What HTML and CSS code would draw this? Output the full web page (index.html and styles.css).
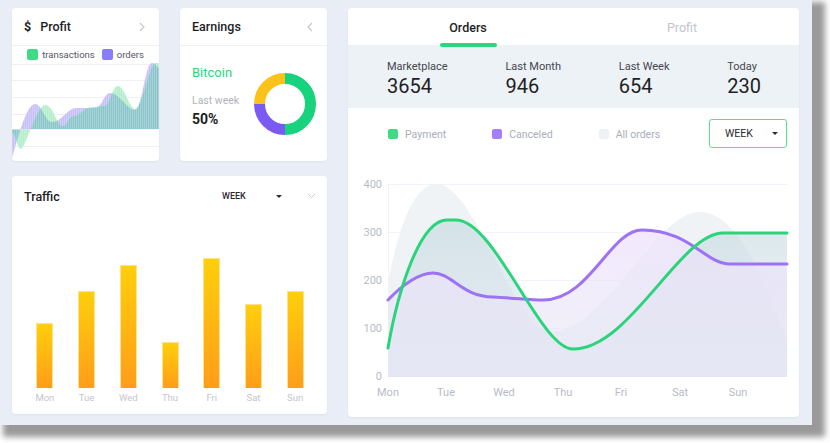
FILE: index.html
```html
<!DOCTYPE html>
<html>
<head>
<meta charset="utf-8">
<link rel="stylesheet" href="styles.css">
</head>
<body>
<div class="frame">

  <div class="card profit">
    <div class="card-head">
      <span class="title"><b class="dollar">$</b>Profit</span>
      <svg class="chev" width="6" height="10" viewBox="0 0 6 10"><path d="M1 1l4 4-4 4" fill="none" stroke="#c4c7ce" stroke-width="1.1"/></svg>
    </div>
    <div class="mini-legend">
      <span class="ml"><i class="sw sw-green"></i>transactions</span>
      <span class="ml"><i class="sw sw-purple"></i>orders</span>
    </div>
    <svg class="profit-chart" width="147" height="99" viewBox="0 0 147 99">
      <defs>
        <clipPath id="clipPurple"><path d="M0,96 C5,80 14,42 23,42 C30,42 33,60 40,60 C50,60 55,46 65,46 C72,46 76,46 83,46 C90,46 92,31 98,31 C108,31 115,48 123,48 C130,48 133,1 140,1 C144,1 145,6 147,6 L147,67 L0,67 Z"/></clipPath>
        <clipPath id="clipBoth">
          <path d="M0,96 C5,80 14,42 23,42 C30,42 33,60 40,60 C50,60 55,46 65,46 C72,46 76,46 83,46 C90,46 92,31 98,31 C108,31 115,48 123,48 C130,48 133,1 140,1 C144,1 145,6 147,6 L147,67 L0,67 Z"/>
          <path d="M0,71 C4,71 5,87 9,87 C13,87 25,43 33,43 C42,43 44,64 51,64 C56,64 56,54 62,54 C68,54 72,45 80,45 C85,45 88,44 92,44 C98,44 100,24 106,24 C112,24 118,47 123,47 C130,47 138,1 143,1 L147,1 L147,67 L0,67 Z"/>
        </clipPath>
        <pattern id="stripes" width="2" height="4" patternUnits="userSpaceOnUse"><rect width="1" height="4" fill="#ffffff" opacity="0.22"/></pattern>
      </defs>
      <g stroke="#eef0f4" stroke-width="1">
        <line x1="0" y1="2.5" x2="147" y2="2.5"/>
        <line x1="0" y1="18.5" x2="147" y2="18.5"/>
        <line x1="0" y1="35.5" x2="147" y2="35.5"/>
        <line x1="0" y1="52.5" x2="147" y2="52.5"/>
        <line x1="0" y1="84.5" x2="147" y2="84.5"/>
      </g>
      <path fill="#c7bff8" d="M0,96 C5,80 14,42 23,42 C30,42 33,60 40,60 C50,60 55,46 65,46 C72,46 76,46 83,46 C90,46 92,31 98,31 C108,31 115,48 123,48 C130,48 133,1 140,1 C144,1 145,6 147,6 L147,67 L0,67 Z"/>
      <path fill="#b3eecb" d="M0,71 C4,71 5,87 9,87 C13,87 25,43 33,43 C42,43 44,64 51,64 C56,64 56,54 62,54 C68,54 72,45 80,45 C85,45 88,44 92,44 C98,44 100,24 106,24 C112,24 118,47 123,47 C130,47 138,1 143,1 L147,1 L147,67 L0,67 Z"/>
      <path fill="#8cc5ca" clip-path="url(#clipPurple)" d="M0,71 C4,71 5,87 9,87 C13,87 25,43 33,43 C42,43 44,64 51,64 C56,64 56,54 62,54 C68,54 72,45 80,45 C85,45 88,44 92,44 C98,44 100,24 106,24 C112,24 118,47 123,47 C130,47 138,1 143,1 L147,1 L147,67 L0,67 Z"/>
      <rect x="0" y="0" width="147" height="99" fill="url(#stripes)" clip-path="url(#clipBoth)"/>
      <line x1="0" y1="67.5" x2="147" y2="67.5" stroke="#e6e9f0" stroke-width="1" opacity="0.6"/>
    </svg>
  </div>

  <div class="card earnings">
    <div class="card-head">
      <span class="title">Earnings</span>
      <svg class="chev" width="6" height="10" viewBox="0 0 6 10"><path d="M5 1L1 5l4 4" fill="none" stroke="#c4c7ce" stroke-width="1.1"/></svg>
    </div>
    <div class="earn-body">
      <div class="earn-text">
        <div class="coin">Bitcoin</div>
        <div class="lw">Last week</div>
        <div class="pct">50%</div>
      </div>
      <svg class="donut" width="62" height="62" viewBox="0 0 62 62">
        <g fill="none" stroke-width="11">
          <path d="M31,5.5 A25.5,25.5 0 0 1 31,56.5" stroke="#18d37d"/>
          <path d="M31,56.5 A25.5,25.5 0 0 1 5.5,31" stroke="#7b5af4"/>
          <path d="M5.5,31 A25.5,25.5 0 0 1 31,5.5" stroke="#fbc21a"/>
        </g>
      </svg>
    </div>
  </div>

  <div class="card orders">
    <div class="tabs">
      <div class="tab active">Orders</div>
      <div class="tab">Profit</div>
    </div>
    <div class="stats">
      <div class="stat"><div class="stat-label">Marketplace</div><div class="stat-num">3654</div></div>
      <div class="stat"><div class="stat-label">Last Month</div><div class="stat-num">946</div></div>
      <div class="stat"><div class="stat-label">Last Week</div><div class="stat-num">654</div></div>
      <div class="stat"><div class="stat-label">Today</div><div class="stat-num">230</div></div>
    </div>
    <div class="order-legend">
      <span class="item"><i class="sq sq-green"></i>Payment</span>
      <span class="item"><i class="sq sq-purple"></i>Canceled</span>
      <span class="item"><i class="sq sq-light"></i>All orders</span>
      <div class="select"><span>WEEK</span><i class="caret"></i></div>
    </div>
    <svg class="main-chart" width="451" height="259" viewBox="348 158 451 259">
      <defs>
        <linearGradient id="gPurple" x1="0" y1="0" x2="0" y2="1">
          <stop offset="0" stop-color="#efe2fc" stop-opacity="0.75"/>
          <stop offset="1" stop-color="#e4e6f4" stop-opacity="0.55"/>
        </linearGradient>
        <linearGradient id="gGreen" x1="0" y1="0" x2="0" y2="1">
          <stop offset="0" stop-color="#c2d9df" stop-opacity="0.6"/>
          <stop offset="1" stop-color="#dcdff0" stop-opacity="0.45"/>
        </linearGradient>
      </defs>
      <g stroke="#f1f2fb" stroke-width="1">
        <line x1="388" y1="184.5" x2="787" y2="184.5"/>
        <line x1="388" y1="232.5" x2="787" y2="232.5"/>
        <line x1="388" y1="280.5" x2="787" y2="280.5"/>
        <line x1="388" y1="328.5" x2="787" y2="328.5"/>
        <line x1="388.5" y1="184" x2="388.5" y2="376"/>
      </g>
      <path fill="#edf2f5" opacity="0.9" d="M388,376 L388,282 C398,232 412,184 437,184 C475,184 515,332 550,332 C605,332 655,212 700,212 C740,212 768,290 787,340 L787,376 Z"/>
      <path fill="url(#gGreen)" d="M388,348 C398,290 420,220 447,220 L456,220 C495,220 540,349 573,349 C630,349 680,233 723,233 L787,233 L787,376 L388,376 Z"/>
      <path fill="url(#gPurple)" d="M388,300 C403,284 420,273 433,273 C452,273 462,297 493,297 C515,298 530,300 543,300 C590,300 610,230 642,230 C690,230 705,264 730,264 L787,264 L787,376 L388,376 Z"/>
      <line x1="388" y1="376.5" x2="787" y2="376.5" stroke="#e3e4f7" stroke-width="1"/>
      <path fill="none" stroke="#9d72f6" stroke-width="3" stroke-linecap="round" d="M388,300 C403,284 420,273 433,273 C452,273 462,297 493,297 C515,298 530,300 543,300 C590,300 610,230 642,230 C690,230 705,264 730,264 L787,264"/>
      <path fill="none" stroke="#2bd47b" stroke-width="3" stroke-linecap="round" d="M388,348 C398,290 420,220 447,220 L456,220 C495,220 540,349 573,349 C630,349 680,233 723,233 L787,233"/>
      <g class="axis" font-size="11" fill="#b7bbc7" text-anchor="end">
        <text x="382" y="188">400</text>
        <text x="382" y="236">300</text>
        <text x="382" y="284">200</text>
        <text x="382" y="332">100</text>
        <text x="382" y="380">0</text>
      </g>
      <g class="axis" font-size="11" fill="#b7bbc7" text-anchor="middle">
        <text x="388" y="396">Mon</text>
        <text x="446" y="396">Tue</text>
        <text x="504" y="396">Wed</text>
        <text x="563" y="396">Thu</text>
        <text x="621" y="396">Fri</text>
        <text x="680" y="396">Sat</text>
        <text x="738" y="396">Sun</text>
      </g>
    </svg>
  </div>

  <div class="card traffic">
    <div class="traffic-head">
      <span class="title grow">Traffic</span>
      <span class="wk">WEEK</span>
      <i class="caret"></i>
      <svg class="chev-down" width="9" height="6" viewBox="0 0 9 6"><path d="M1 1l3.5 3.5L8 1" fill="none" stroke="#c9ccd2" stroke-width="1"/></svg>
    </div>
    <div class="bars">
      <div class="slot"><div class="bar" style="height:65px"></div></div>
      <div class="slot"><div class="bar" style="height:97px"></div></div>
      <div class="slot"><div class="bar" style="height:123px"></div></div>
      <div class="slot"><div class="bar" style="height:46px"></div></div>
      <div class="slot"><div class="bar" style="height:130px"></div></div>
      <div class="slot"><div class="bar" style="height:84px"></div></div>
      <div class="slot"><div class="bar" style="height:97px"></div></div>
    </div>
    <div class="days">
      <span>Mon</span><span>Tue</span><span>Wed</span><span>Thu</span><span>Fri</span><span>Sat</span><span>Sun</span>
    </div>
  </div>

</div>
</body>
</html>
```

FILE: styles.css
```css
* { box-sizing: border-box; }

html, body {
  margin: 0;
  background: #ffffff;
  min-height: 443px;
}

body {
  font-family: Roboto, "Liberation Sans", sans-serif;
}

.frame {
  width: 812px;
  height: 425px;
  background: #e9edf5;
  box-shadow: 8px 7px 6px 5px rgba(0, 0, 0, 0.4);
  display: grid;
  grid-template-columns: 147px 147px 451px;
  grid-template-rows: 153px 238px;
  column-gap: 21px;
  row-gap: 15px;
  padding: 8px 0 0 12px;
  align-items: start;
}

.card {
  background: #ffffff;
  border-radius: 4px;
  box-shadow: 0 1px 2px rgba(40, 50, 80, 0.05);
  overflow: hidden;
  position: relative;
}

.title {
  font-size: 12.5px;
  font-weight: 500;
  color: #1e1e24;
}

.dollar {
  font-weight: 700;
  margin-right: 9px;
}

.card-head {
  height: 38px;
  border-bottom: 1px solid #eef0f4;
  display: flex;
  align-items: center;
  justify-content: space-between;
  padding: 0 14px 0 12px;
}

/* Profit */
.profit, .earnings { height: 153px; }

.mini-legend {
  height: 16px;
  display: flex;
  justify-content: center;
  align-items: center;
  gap: 7px;
  font-size: 9.5px;
  color: #55575f;
}

.ml { display: flex; align-items: center; }

.sw {
  display: inline-block;
  width: 11px;
  height: 11px;
  border-radius: 2px;
  margin-right: 4px;
}
.sw-green { background: #3ddc84; }
.sw-purple { background: #8b7cf7; }

.profit-chart { display: block; }

/* Earnings */
.earn-body {
  height: 115px;
  display: flex;
  justify-content: space-between;
  align-items: center;
  padding: 0 11px 0 12px;
}

.earn-text { align-self: flex-start; padding-top: 19px; }

.coin {
  font-size: 13px;
  line-height: 16px;
  color: #2ed47a;
}

.lw {
  margin-top: 13px;
  font-size: 10.5px;
  line-height: 14px;
  color: #b0b4bd;
}

.pct {
  margin-top: 2px;
  font-size: 14px;
  line-height: 18px;
  font-weight: 700;
  color: #1e1e24;
}

.donut { display: block; }

/* Orders */
.orders {
  grid-column: 3;
  grid-row: 1 / span 2;
  height: 409px;
}

.tabs {
  height: 37px;
  display: flex;
  padding: 0 10px 0 13px;
}

.tab {
  flex: 1;
  display: flex;
  align-items: center;
  justify-content: center;
  padding-top: 1px;
  font-size: 12.5px;
  color: #c2c5cd;
  position: relative;
}

.tab.active {
  color: #1e1e24;
  font-weight: 500;
}

.tab.active::after {
  content: "";
  position: absolute;
  bottom: -2px;
  left: 50%;
  width: 57px;
  margin-left: -28px;
  height: 4px;
  border-radius: 2px;
  background: #2fd57b;
  z-index: 2;
}

.stats {
  height: 63px;
  background: #edf2f6;
  display: flex;
  justify-content: space-between;
  align-items: flex-start;
  padding: 15px 38px 0 39px;
}

.stat-label {
  font-size: 11px;
  line-height: 14px;
  color: #45464e;
}

.stat-num {
  margin-top: 1px;
  font-size: 20px;
  line-height: 22px;
  color: #1e1e24;
}

.order-legend {
  height: 50px;
  display: flex;
  align-items: center;
  padding: 2px 12px 0 40px;
}

.item {
  display: flex;
  align-items: center;
  font-size: 10.5px;
  color: #a9aebb;
  margin-right: 46px;
}

.sq {
  width: 10px;
  height: 10px;
  border-radius: 2px;
  margin-right: 7px;
}
.sq-green { background: #3ddc84; }
.sq-purple { background: #a37ff8; }
.sq-light { background: #eef2f6; }

.select {
  margin-left: auto;
  margin-top: -2px;
  width: 78px;
  height: 29px;
  border: 1.5px solid #55e08f;
  border-radius: 3px;
  display: flex;
  align-items: center;
  justify-content: space-between;
  padding: 0 8px 0 15px;
  font-size: 10.5px;
  color: #2a2a30;
}

.caret {
  width: 0;
  height: 0;
  border-left: 3px solid transparent;
  border-right: 3px solid transparent;
  border-top: 3px solid #2a2a30;
}

.main-chart { display: block; }
.axis { font-family: Roboto, "Liberation Sans", sans-serif; }

/* Traffic */
.traffic {
  grid-column: 1 / span 2;
  grid-row: 2;
  height: 238px;
}

.traffic-head {
  height: 40px;
  display: flex;
  align-items: center;
  padding: 0 11px 0 12px;
}

.grow { flex: 1; }

.wk {
  width: 54px;
  font-size: 9px;
  font-weight: 500;
  color: #2a2a30;
}

.chev-down { margin-left: 25px; display: block; }

.bars {
  height: 172px;
  display: flex;
  align-items: flex-end;
  padding: 0 11px 0 12px;
}

.slot {
  flex: 1;
  height: 100%;
  display: flex;
  justify-content: center;
  align-items: flex-end;
}

.bar {
  width: 17px;
  background: linear-gradient(#ffcf0c, #ff9d19);
  border: 1px solid #ffe38c;
  border-bottom: none;
}

.days {
  height: 20px;
  display: flex;
  padding: 0 11px 0 12px;
}

.days span {
  flex: 1;
  text-align: center;
  font-size: 9.5px;
  line-height: 20px;
  color: #c3c6cd;
}
```
